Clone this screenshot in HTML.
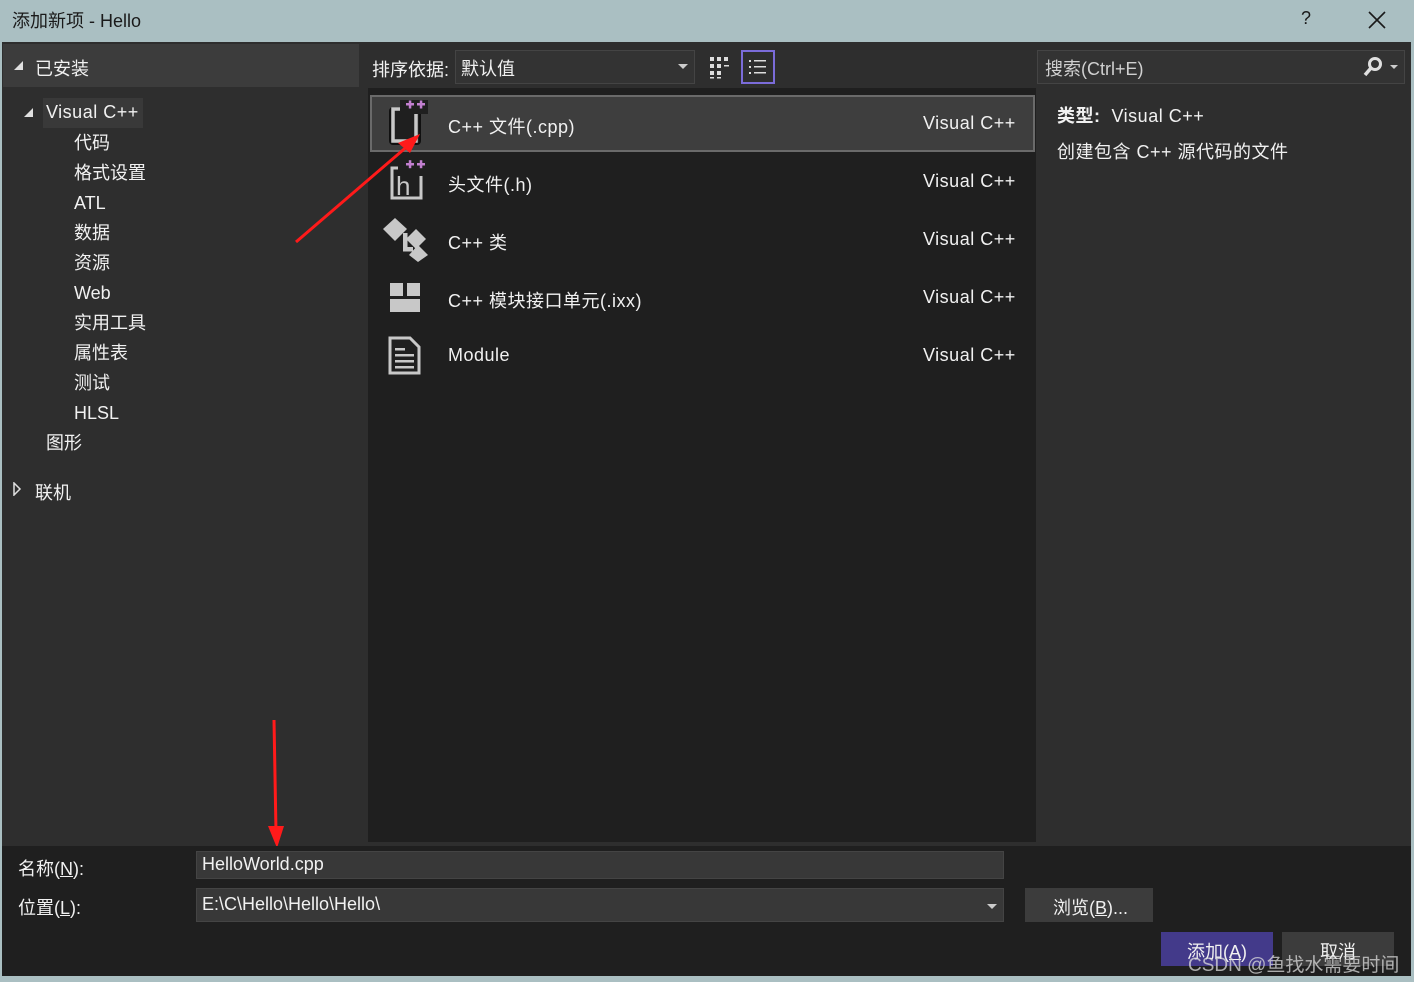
<!DOCTYPE html>
<html><head><meta charset="utf-8"><style>
*{margin:0;padding:0;box-sizing:border-box}
body{width:1414px;height:982px;overflow:hidden;background:#2e2e2e;font-family:"Liberation Sans","Noto Sans CJK SC",sans-serif;color:#f1f1f1;font-size:18px;position:relative}
.a{position:absolute;white-space:nowrap}
.v{letter-spacing:0.5px}
</style></head><body>
<div class="a" style="left:0;top:0;width:1414px;height:42px;background:#aabfc2"></div>
<div class="a" style="left:12px;top:7px;color:#1a1a1a;font-size:18px">添加新项 - Hello</div>
<div class="a" style="left:1301px;top:8px;color:#1a1a1a;font-size:18px">?</div>
<svg class="a" style="left:1368px;top:11px" width="18" height="18"><path d="M1 1L17 17M17 1L1 17" stroke="#1a1a1a" stroke-width="1.6"/></svg>
<div class="a" style="left:0;top:42px;width:2px;height:940px;background:#aabfc2"></div>
<div class="a" style="left:1411px;top:42px;width:3px;height:940px;background:#aabfc2"></div>
<div class="a" style="left:0;top:976px;width:1414px;height:6px;background:#aabfc2"></div>

<!-- left -->
<div class="a" style="left:3px;top:44px;width:356px;height:43px;background:#3c3c3c"></div>
<svg class="a" style="left:13px;top:60px" width="12" height="12"><path d="M10 1V10H1Z" fill="#e0e0e0"/></svg>
<div class="a" style="left:35px;top:55px">已安装</div>
<div class="a" style="left:43px;top:98px;width:100px;height:30px;background:#393939"></div>
<svg class="a" style="left:23px;top:107px" width="12" height="12"><path d="M10 1V10H1Z" fill="#e0e0e0"/></svg>
<div class="a v" style="left:46px;top:102px">Visual C++</div>
<div class="a" style="left:74px;top:128px;line-height:30px">代码<br>格式设置<br>ATL<br>数据<br>资源<br>Web<br>实用工具<br>属性表<br>测试<br>HLSL</div>
<div class="a" style="left:46px;top:428px;line-height:30px">图形</div>
<svg class="a" style="left:12px;top:482px" width="10" height="14"><path d="M2 1L8 7L2 13Z" fill="none" stroke="#e0e0e0" stroke-width="1.5"/></svg>
<div class="a" style="left:35px;top:479px">联机</div>

<!-- toolbar -->
<div class="a" style="left:372px;top:56px">排序依据:</div>
<div class="a" style="left:455px;top:50px;width:240px;height:34px;background:#333;border:1px solid #444"></div>
<div class="a" style="left:461px;top:55px">默认值</div>
<svg class="a" style="left:678px;top:64px" width="10" height="6"><path d="M0 0H10L5 5Z" fill="#ccc"/></svg>
<svg class="a" style="left:708px;top:55px" width="24" height="24"><g fill="#ddd"><rect x="2" y="2" width="4" height="4"/><rect x="9" y="2" width="4" height="4"/><rect x="16" y="2" width="4" height="4"/><rect x="2" y="9" width="4" height="4"/><rect x="9" y="9" width="4" height="4"/><rect x="16" y="10" width="5" height="1.5"/><rect x="2" y="16" width="4" height="4"/><rect x="9" y="16" width="4" height="4"/><rect x="2" y="22" width="4" height="1.5"/><rect x="9" y="22" width="4" height="1.5"/></g></svg>
<div class="a" style="left:741px;top:50px;width:34px;height:34px;border:2px solid #7b6cd9"></div>
<svg class="a" style="left:748px;top:58px" width="20" height="18"><g fill="#ddd"><rect x="1" y="2" width="2" height="2"/><rect x="6" y="2" width="12" height="1.5"/><rect x="1" y="8" width="2" height="2"/><rect x="6" y="8" width="12" height="1.5"/><rect x="1" y="14" width="2" height="2"/><rect x="6" y="14" width="12" height="1.5"/></g></svg>

<!-- list -->
<div class="a" style="left:368px;top:88px;width:668px;height:754px;background:#1f1f1f"></div>
<div class="a" style="left:370px;top:95px;width:665px;height:57px;background:#3e3e3e;border:2px solid #6a6a6a"></div>
<svg class="a" style="left:386px;top:100px" width="44" height="48"><rect x="4" y="8" width="30" height="36" rx="3" fill="#1f1f1f" stroke="#111" stroke-width="2"/><path d="M14 9H7V41H30V9H26" fill="none" stroke="#c8c8c8" stroke-width="3.5"/><rect x="14" y="0" width="28" height="14" fill="#1f1f1f"/><g fill="#c27fd0"><rect x="20" y="3" width="8" height="2.5"/><rect x="22.8" y="0.5" width="2.5" height="8"/><rect x="31" y="3" width="8" height="2.5"/><rect x="33.8" y="0.5" width="2.5" height="8"/></g></svg>
<div class="a v" style="left:448px;top:113px">C++ 文件(.cpp)</div>
<div class="a v" style="left:923px;top:113px">Visual C++</div>

<svg class="a" style="left:386px;top:158px" width="44" height="46"><path d="M12 10H6V40H35V18" fill="none" stroke="#c8c8c8" stroke-width="3"/><text x="10" y="37" font-family="Liberation Sans" font-size="26" fill="#c8c8c8">h</text><g fill="#c27fd0"><rect x="20" y="5" width="8" height="2.5"/><rect x="22.8" y="2.2" width="2.5" height="8"/><rect x="31" y="5" width="8" height="2.5"/><rect x="33.8" y="2.2" width="2.5" height="8"/></g></svg>
<div class="a v" style="left:448px;top:171px">头文件(.h)</div>
<div class="a v" style="left:923px;top:171px">Visual C++</div>

<svg class="a" style="left:383px;top:217px" width="46" height="46"><g fill="#c8c8c8"><path d="M12 1L24 12L12 24L0 12Z"/><path d="M33 12L43 22L33 32L23 22Z"/><path d="M35 28L45 38L35 45L26 38Z"/><rect x="20" y="16" width="4.5" height="18"/><rect x="20" y="30" width="10" height="4.5"/></g></svg>
<div class="a v" style="left:448px;top:229px">C++ 类</div>
<div class="a v" style="left:923px;top:229px">Visual C++</div>

<svg class="a" style="left:388px;top:282px" width="34" height="32"><g fill="#c8c8c8"><rect x="2" y="1" width="13" height="13"/><rect x="19" y="1" width="13" height="13"/><rect x="2" y="17" width="30" height="13"/></g></svg>
<div class="a v" style="left:448px;top:287px">C++ 模块接口单元(.ixx)</div>
<div class="a v" style="left:923px;top:287px">Visual C++</div>

<svg class="a" style="left:388px;top:336px" width="34" height="40"><path d="M2 2H22L31 11V37H2Z" fill="none" stroke="#c8c8c8" stroke-width="3"/><g fill="#c8c8c8"><rect x="7" y="12" width="10" height="2.5"/><rect x="7" y="18" width="19" height="2.5"/><rect x="7" y="24" width="19" height="2.5"/><rect x="7" y="30" width="19" height="2.5"/></g></svg>
<div class="a v" style="left:448px;top:345px">Module</div>
<div class="a v" style="left:923px;top:345px">Visual C++</div>

<!-- right -->
<div class="a" style="left:1037px;top:50px;width:368px;height:34px;background:#333;border:1px solid #444"></div>
<div class="a" style="left:1045px;top:55px;color:#d0d0d0">搜索(Ctrl+E)</div>
<svg class="a" style="left:1362px;top:56px" width="40" height="22"><circle cx="13" cy="8" r="5.5" fill="none" stroke="#e0e0e0" stroke-width="3"/><path d="M9 12L3 19" stroke="#e0e0e0" stroke-width="3.5"/><path d="M28 9H36L32 13Z" fill="#ccc"/></svg>
<div class="a v" style="left:1057px;top:102px"><b>类型:</b>&nbsp; Visual C++</div>
<div class="a v" style="left:1057px;top:138px">创建包含 C++ 源代码的文件</div>

<!-- arrows -->
<svg class="a" style="left:0;top:0" width="1414" height="982"><path d="M296 242L410 144" stroke="#ff1a1a" stroke-width="3"/><path d="M420 134L398 143L410 153Z" fill="#ff1a1a"/><path d="M274 720L276 832" stroke="#ff1a1a" stroke-width="3"/><path d="M268 826L277 848L284 826Z" fill="#ff1a1a"/></svg>

<!-- bottom -->
<div class="a" style="left:2px;top:846px;width:1409px;height:130px;background:#1f1f1f"></div>
<div class="a" style="left:18px;top:855px">名称(<u>N</u>):</div>
<div class="a" style="left:196px;top:851px;width:808px;height:28px;background:#383838;border:1px solid #444"></div>
<div class="a" style="left:202px;top:854px">HelloWorld.cpp</div>
<div class="a" style="left:18px;top:894px">位置(<u>L</u>):</div>
<div class="a" style="left:196px;top:888px;width:808px;height:34px;background:#383838;border:1px solid #444"></div>
<div class="a" style="left:202px;top:894px">E:\C\Hello\Hello\Hello\</div>
<svg class="a" style="left:987px;top:904px" width="10" height="6"><path d="M0 0H10L5 5Z" fill="#ccc"/></svg>
<div class="a" style="left:1025px;top:888px;width:128px;height:34px;background:#3c3c3c"></div>
<div class="a" style="left:1053px;top:894px">浏览(<u>B</u>)...</div>
<div class="a" style="left:1161px;top:932px;width:112px;height:34px;background:#433a8a"></div>
<div class="a" style="left:1187px;top:938px">添加(<u>A</u>)</div>
<div class="a" style="left:1282px;top:932px;width:112px;height:34px;background:#3c3c3c"></div>
<div class="a" style="left:1320px;top:938px">取消</div>
<div class="a" style="left:1188px;top:950px;color:rgba(220,220,220,0.75);font-size:19px">CSDN @鱼找水需要时间</div>
</body></html>
